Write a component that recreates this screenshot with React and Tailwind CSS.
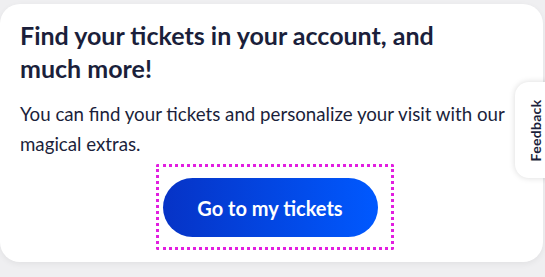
import React from 'react';

function FeedbackTab() {
  return (
    <button className="absolute right-[-12px] top-[82px] flex h-[96px] w-[42px] items-center justify-center rounded-l-[14px] bg-white shadow-[0_0_6px_rgba(0,0,0,0.15)]">
      <span className="-rotate-90 text-[14px] font-bold tracking-[0.3px] text-[#1b1f3b]">Feedback</span>
    </button>
  );
}

export default function App() {
  return (
    <div className="relative h-[277px] w-[545px] overflow-hidden bg-[#efeff1] pt-[4px] pr-[2px] font-['Lato',sans-serif]">
      <div className="h-[258px] rounded-[20px] bg-white px-5 pt-[15px] shadow-[0_2px_6px_rgba(0,0,0,0.06)]">
        <h2 className="max-w-[440px] text-[25px] font-bold leading-[33px] text-[#1b1f3b]">
          Find your tickets in your account, and much more!
        </h2>
        <p className="mt-[14px] pr-[4px] text-[18.7px] leading-[30px] text-[#1b1f3b]">
          You can find your tickets and personalize your visit with our magical extras.
        </p>
        <div className="mt-[5px] flex justify-center pl-[6px]">
          <div className="rounded-[2px] border-[3px] border-dotted border-[#e21ee0] pb-[10px] pl-[4px] pr-[13px] pt-[11px]">
            <button className="h-[59px] w-[215px] rounded-full bg-gradient-to-r from-[#0633c6] to-[#0059ff] text-[20px] font-bold text-white">
              Go to my tickets
            </button>
          </div>
        </div>
      </div>
      <FeedbackTab />
    </div>
  );
}
